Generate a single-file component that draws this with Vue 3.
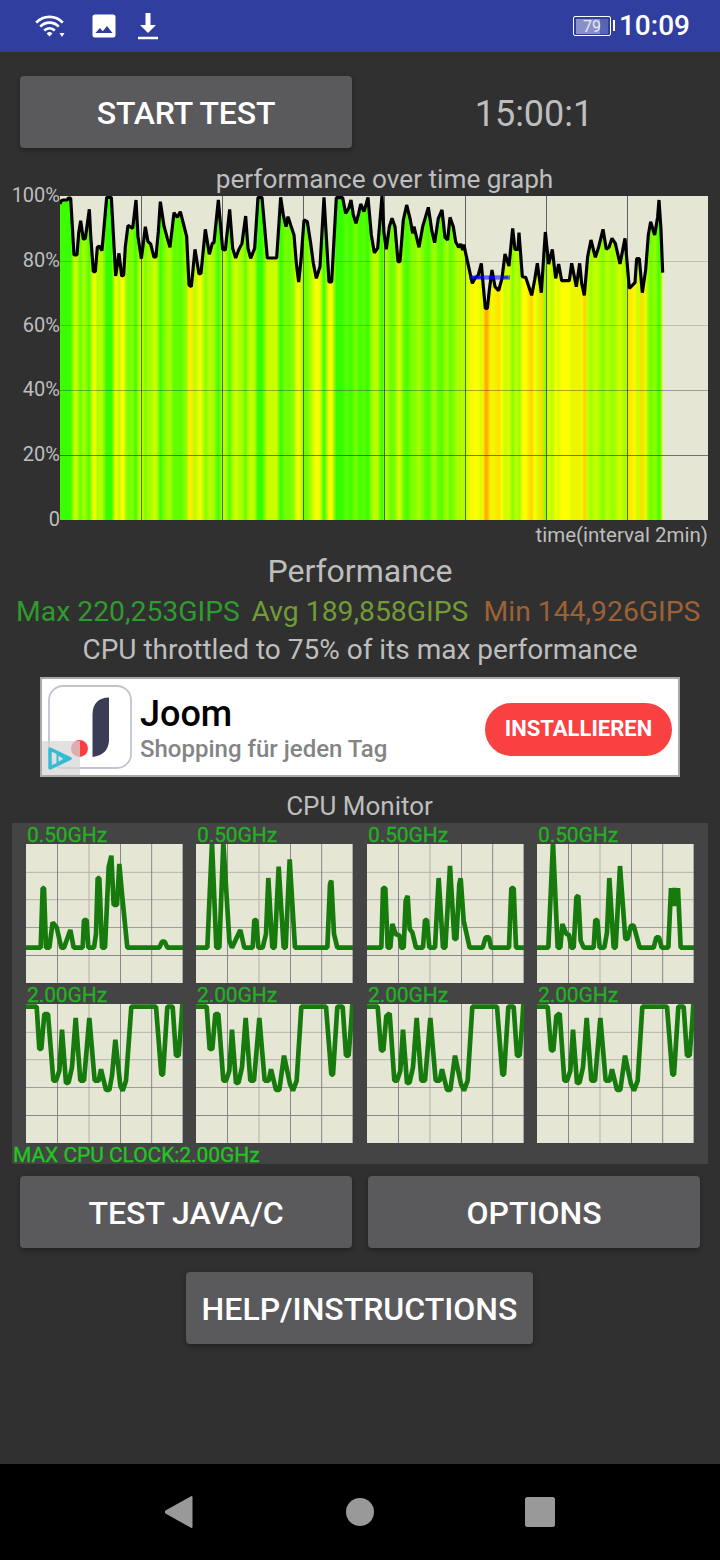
<template>
  <div class="screen">
    <header class="status-bar">
      <div class="status-icons">
        <svg class="icon-wifi" width="32" height="26" viewBox="0 0 32 26">
          <g fill="none" stroke="#fff" stroke-width="2.7">
            <path d="M2.2 9.6C9.5 2 21.5 2 28.8 9.6" />
            <path d="M6.2 13.6C11.5 8.4 19.5 8.4 24.8 13.6" />
            <path d="M10.2 17.6C13.4 14.6 17.6 14.6 20.8 17.6" />
          </g>
          <path d="M12.6 20.4Q15.5 17.8 18.4 20.4L15.5 23.6Z" fill="#fff" />
          <path d="M25.5 20H30.5L28 24Z" fill="#fff" />
        </svg>
        <svg class="icon-image" width="24" height="24" viewBox="0 0 24 24">
          <path
            fill="#fff"
            fill-rule="evenodd"
            d="M3 .5H21A2.5 2.5 0 0 1 23.5 3V21A2.5 2.5 0 0 1 21 23.5H3A2.5 2.5 0 0 1 .5 21V3A2.5 2.5 0 0 1 3 .5ZM3.5 19H20.5L15 12L10.8 17.2L7.8 14Z"
          />
        </svg>
        <svg class="icon-download" width="20" height="28" viewBox="0 0 20 28">
          <path d="M7.5 1H12.5V13H18L10 21L2 13H7.5ZM0 24.7H20V27.2H0Z" fill="#fff" />
        </svg>
      </div>
      <div class="status-right">
        <div class="battery"><span>79</span></div>
        <span class="clock">10:09</span>
      </div>
    </header>

    <main class="content">
      <div class="row top-row">
        <button class="btn start">START TEST</button>
        <div class="timer">15:00:1</div>
      </div>

      <div class="graph-title">performance over time graph</div>
      <div class="graph">
        <div class="axis">
          <span v-for="label in axisLabels" :key="label">{{ label }}</span>
        </div>
        <svg class="plot" width="648" height="324" viewBox="0 0 1944 972">
          <defs>
            <linearGradient id="heat" gradientUnits="userSpaceOnUse" x1="0" y1="0" x2="1944" y2="0">
              <stop
                v-for="(s, i) in stops"
                :key="i"
                :offset="s.offset"
                :stop-color="s.color"
              />
            </linearGradient>
          </defs>
          <rect width="1944" height="972" fill="#e6e6d4" />
          <polygon :points="areaPoints" fill="url(#heat)" />
          <g fill="#33333b" shape-rendering="crispEdges">
            <rect v-for="n in 7" :key="n" :x="n * 243" y="0" width="3" height="972" opacity="0.75" />
            <rect
              v-for="line in gridRows"
              :key="line.y"
              x="0"
              :y="line.y * 3"
              width="1944"
              height="3"
              :opacity="line.opacity"
            />
          </g>
          <polyline
            :points="linePoints"
            fill="none"
            stroke="#000"
            stroke-width="9.5"
            stroke-linejoin="bevel"
          />
          <rect x="1228" y="238" width="122" height="13" fill="#0000ff" opacity="0.55" />
          <rect x="1234" y="241" width="38" height="7" fill="#0000ff" opacity="0.8" />
          <rect x="1286" y="241" width="18" height="7" fill="#0000ff" opacity="0.8" />
          <rect x="1330" y="241" width="14" height="7" fill="#0000ff" opacity="0.6" />
        </svg>
      </div>
      <div class="time-label">time(interval 2min)</div>

      <div class="perf-title">Performance</div>
      <div class="stats">
        <span class="max">Max 220,253GIPS</span>
        <span class="avg">Avg 189,858GIPS</span>
        <span class="min">Min 144,926GIPS</span>
      </div>
      <div class="throttled">CPU throttled to 75% of its max performance</div>

      <div class="ad">
        <svg class="ad-logo" width="92" height="96" viewBox="0 0 92 96">
          <rect x="7" y="7" width="82" height="82" rx="14" fill="#fff" stroke="#c4c4d0" stroke-width="1.8" />
          <circle cx="37.5" cy="69.5" r="8.5" fill="#fb3f40" />
          <path d="M50.5 78V35Q51 19 67 18.5V62Q66 76 50.5 78Z" fill="#3b3d57" />
          <path d="M0 62H38V96H0Z" fill="#d6d6d6" fill-opacity="0.72" />
          <path d="M8 70V89L28 79.5Z" fill="none" stroke="#35bbd6" stroke-width="3.4" stroke-linejoin="round" />
          <path d="M15.5 75V84.5L23 79.8Z" fill="none" stroke="#35bbd6" stroke-width="2" />
        </svg>
        <div class="ad-text">
          <div class="ad-name">Joom</div>
          <div class="ad-sub">Shopping für jeden Tag</div>
        </div>
        <button class="install">INSTALLIEREN</button>
      </div>

      <div class="monitor-title">CPU Monitor</div>
      <div class="monitor">
        <div class="cores">
          <div v-for="(core, i) in cores" :key="i" class="core">
            <div class="freq">{{ core.freq }}</div>
            <svg width="157" height="139" viewBox="0 0 471 417">
              <rect width="471" height="417" fill="#e6e6d4" />
              <g stroke="#77777f" stroke-width="3">
                <path d="M94.5 0V417M283.5 0V417M377 0V417M0 334.5H471" opacity="0.85" />
                <path d="M0 250.5H471M470 0V417" opacity="0.65" />
                <path d="M189 0V417M0 85H471M0 167H471" opacity="0.45" />
              </g>
              <polyline
                :points="core.points"
                fill="none"
                stroke="#167a0d"
                stroke-width="14"
                stroke-linejoin="bevel"
              />
            </svg>
          </div>
        </div>
        <div class="max-clock">MAX CPU CLOCK:2.00GHz</div>
      </div>

      <div class="row bottom-row">
        <button class="btn">TEST JAVA/C</button>
        <button class="btn">OPTIONS</button>
      </div>
      <button class="btn help">HELP/INSTRUCTIONS</button>
    </main>

    <nav class="nav-bar">
      <svg width="30" height="34" viewBox="0 0 30 34">
        <path d="M0 17L26.5 2V32Z" fill="#999" stroke="#999" stroke-width="2" stroke-linejoin="round" />
      </svg>
      <svg width="30" height="34" viewBox="0 0 30 34">
        <circle cx="15" cy="17" r="14" fill="#999" />
      </svg>
      <svg width="30" height="34" viewBox="0 0 30 34">
        <rect x="0" y="2" width="30" height="30" rx="2.5" fill="#999" />
      </svg>
    </nav>
  </div>
</template>

<script setup>
const axisLabels = ['100%', '80%', '60%', '40%', '20%', '0']

const gridRows = [
  { y: 65, opacity: 0.22 },
  { y: 129, opacity: 0.22 },
  { y: 194, opacity: 0.4 },
  { y: 259, opacity: 0.65 }
]

// x,y samples of the benchmark, y = 0 is 100% and y = 972 is 0%
const samples = `
0,24 4,14 10,12 22,12 25,6 32,6 42,177 51,177 56,112 62,74 70,130 76,127 88,40 92,117
100,227 106,227 112,154 118,150 126,164 140,4 154,4 167,240 177,172 185,240 191,237
196,152 204,88 218,97 228,12 234,122 244,188 250,142 256,92 264,137 272,144 282,184
288,182 295,107 301,17 312,90 322,127 330,154 342,50 352,64 361,47 372,90 380,122
387,267 394,272 405,160 417,234 423,232 436,100 448,175 457,142 462,140 475,12
488,160 496,162 509,40 518,157 527,186 536,162 546,142 557,60 564,157 572,187 584,157
594,4 606,4 622,186 650,186 662,4 670,57 678,92 684,62 692,87 702,117 709,202 716,258
723,192 732,72 742,77 752,142 760,202 769,247 780,212 792,4 807,258 815,258 829,5
848,5 857,52 866,37 873,12 880,57 888,82 896,52 902,24 912,47 924,4 934,117 943,170
953,157 966,0 972,112 979,160 988,92 996,67 1005,92 1014,197 1020,197 1030,72 1040,27
1050,67 1058,112 1062,92 1077,154 1088,92 1105,34 1116,107 1124,140 1135,67 1146,42
1155,124 1163,132 1170,64 1180,92 1187,137 1196,154 1202,144 1208,162 1212,146
1216,167 1227,217 1237,262 1245,247 1255,237 1264,202 1270,272 1276,337 1282,337
1288,282 1296,222 1305,272 1316,284 1326,247 1335,174 1347,210 1358,97 1365,160
1374,160 1377,110 1387,242 1397,244 1415,298 1424,252 1432,202 1444,290 1456,108
1466,204 1477,160 1487,247 1496,204 1505,254 1528,254 1535,202 1549,272 1559,202
1565,262 1573,298 1583,182 1593,132 1606,184 1615,157 1629,100 1639,160 1647,154
1656,127 1666,142 1680,204 1695,127 1708,277 1725,260 1730,188 1738,188 1747,290
1757,222 1765,117 1772,77 1784,117 1793,62 1797,12 1803,102 1808,230
`.trim().split(/\s+/).map((p) => p.split(',').map(Number))

// green at 100%, yellow at 75%, orange below
function heatColor(y) {
  const loss = (y / 972) * 100
  const r = Math.min(255, 48 + loss * 8.1)
  const g = loss <= 26 ? 255 : 255 - (loss - 26) * 9.5
  return `rgb(${Math.round(r)}, ${Math.round(g)}, 0)`
}

const linePoints = samples.map((p) => p.join(',')).join(' ')
const areaPoints = `0,972 ${linePoints} 1808,972`
const stops = samples.map(([x, y]) => ({ offset: x / 1944, color: heatColor(y) }))

const tailBusy = '316,8 390,8 406,212 411,212 424,8 440,8 450,155 458,155 466,50 469,0'
const midBusy = '82,230 90,230 100,200 108,77 120,238 128,235 138,190 149,42 163,230 174,230 190,42 206,230 218,230 225,196 240,258 250,258'

const cores = [
  {
    freq: '0.50GHz',
    points: '0,311 44,311 50,132 54,132 60,311 70,311 80,235 92,250 106,311 114,311 133,258 143,311 170,311 174,228 182,228 187,311 204,311 210,270 215,102 220,102 228,311 237,311 248,70 256,35 263,183 273,183 280,60 288,150 304,311 400,311 408,293 416,293 424,311 471,311'
  },
  {
    freq: '0.50GHz',
    points: '0,311 34,311 48,-5 61,311 70,311 82,-5 100,290 108,311 133,258 145,311 170,311 175,228 181,228 187,311 200,311 210,270 217,102 229,311 236,311 248,68 263,311 269,311 281,46 297,311 394,311 402,120 406,110 414,270 424,311 471,311'
  },
  {
    freq: '0.50GHz',
    points: '0,311 43,311 48,132 55,132 62,311 70,311 76,240 86,270 98,275 102,311 110,311 116,170 122,156 128,255 136,265 147,311 168,311 174,228 180,228 187,311 204,311 215,102 228,311 235,311 249,66 262,285 268,285 277,120 281,103 290,230 308,311 347,311 356,280 366,280 372,311 426,311 433,132 440,132 447,311 471,311'
  },
  {
    freq: '0.50GHz',
    points: '0,311 34,311 48,-5 62,311 70,311 76,240 88,270 96,272 102,311 110,311 118,160 124,155 131,290 140,311 170,311 175,228 181,228 188,311 202,311 210,265 217,102 230,311 236,311 249,66 265,285 272,285 282,245 290,245 308,311 350,311 358,280 366,280 374,311 394,311 402,132 409,186 413,132 417,186 423,132 431,311 471,311'
  },
  {
    freq: '2.00GHz',
    points: `0,8 32,8 40,135 46,135 55,30 66,30 ${midBusy} 258,215 268,107 283,245 290,260 300,230 ${tailBusy}`
  },
  {
    freq: '2.00GHz',
    points: `0,8 32,8 41,135 49,135 58,30 67,30 ${midBusy} 264,155 282,240 291,260 302,230 ${tailBusy}`
  },
  {
    freq: '2.00GHz',
    points: `0,8 32,8 42,138 49,140 58,36 68,28 ${midBusy} 264,155 282,240 291,260 302,230 ${tailBusy}`
  },
  {
    freq: '2.00GHz',
    points: `0,8 32,8 42,138 49,140 58,36 68,28 ${midBusy} 264,155 282,240 291,260 302,230 ${tailBusy}`
  }
]
</script>

<style>
body {
  background: #303030;
}
</style>

<style scoped>
.screen {
  display: flex;
  flex-direction: column;
  width: 720px;
  height: 1560px;
  background: #303030;
  color: #bebebe;
  font-family: Roboto, sans-serif;
  overflow: hidden;
}

svg {
  display: block;
}

button {
  border: none;
  padding: 0;
  font-family: inherit;
}

.status-bar {
  display: flex;
  justify-content: space-between;
  align-items: center;
  height: 52px;
  padding: 0 30px 0 34px;
  background: #303f9f;
  flex: none;
}

.status-icons {
  display: flex;
  align-items: center;
}

.icon-image {
  margin-left: 26px;
}

.icon-download {
  margin-left: 22px;
}

.status-right {
  display: flex;
  align-items: center;
  color: #fff;
}

.battery {
  position: relative;
  box-sizing: border-box;
  width: 38px;
  height: 20px;
  margin-right: 8px;
  border: 1.5px solid #fff;
  border-radius: 2px;
  background: linear-gradient(90deg, #8890ca 76%, #5864b4 76%) content-box;
  padding: 1.5px;
  font-size: 16px;
  line-height: 15px;
  text-align: center;
  color: #e6e8f5;
}

.battery::after {
  content: '';
  position: absolute;
  right: -5px;
  top: 3px;
  width: 2px;
  height: 11px;
  background: #fff;
}

.clock {
  font-size: 28px;
  font-weight: 500;
  line-height: 52px;
}

.content {
  flex: 1;
  padding: 24px 12px 0;
}

.row {
  display: flex;
  gap: 16px;
  padding: 0 8px;
}

.btn {
  width: 332px;
  height: 72px;
  border-radius: 4px;
  background: #5a595b;
  color: #fff;
  font-size: 32px;
  font-weight: 500;
  line-height: 74px;
  box-shadow: 0 2px 5px rgba(0, 0, 0, 0.35);
}

.start {
  letter-spacing: -0.15px;
}

.timer {
  width: 332px;
  line-height: 76px;
  height: 72px;
  font-size: 36px;
  text-align: center;
}

.graph-title {
  height: 32px;
  margin-top: 16px;
  padding-left: 49px;
  font-size: 26.2px;
  line-height: 30px;
  text-align: center;
}

.graph {
  display: flex;
  height: 324px;
}

.axis {
  display: flex;
  flex-direction: column;
  justify-content: space-between;
  width: 48px;
  height: 348px;
  margin-top: -13px;
  font-size: 20px;
  line-height: 24px;
  align-items: flex-end;
}

.time-label {
  height: 32px;
  font-size: 20.5px;
  line-height: 30px;
  text-align: right;
}

.perf-title {
  height: 40px;
  font-size: 32px;
  line-height: 38px;
  text-align: center;
}

.stats {
  display: grid;
  grid-template-columns: repeat(3, 232px);
  height: 38px;
  font-size: 28.3px;
  line-height: 40px;
  text-align: center;
  white-space: nowrap;
}

.max {
  color: #2f9b2f;
}

.avg {
  color: #729b36;
}

.min {
  color: #9c6237;
}

.throttled {
  height: 38px;
  font-size: 28px;
  line-height: 40px;
  text-align: center;
}

.ad {
  display: flex;
  align-items: center;
  box-sizing: border-box;
  width: 640px;
  height: 100px;
  margin: 9px auto 0;
  padding-right: 6px;
  border: 2px solid #a8a8a8;
  background: #fff;
}

.ad-text {
  flex: 1;
  margin-left: 6px;
  padding-top: 7px;
}

.ad-name {
  color: #000;
  font-size: 36px;
  font-weight: 500;
  line-height: 37px;
}

.ad-sub {
  color: #848484;
  font-size: 24px;
  font-weight: 500;
  line-height: 32px;
}

.install {
  width: 187px;
  height: 53px;
  margin-top: 5px;
  padding-bottom: 2px;
  border-radius: 27px;
  background: #f94142;
  color: #fff;
  font-size: 22px;
  font-weight: 700;
}

.monitor-title {
  height: 32px;
  margin-top: 14px;
  padding-right: 1px;
  font-size: 26px;
  line-height: 30px;
  text-align: center;
}

.monitor {
  height: 341px;
  background: #444;
}

.cores {
  display: grid;
  grid-template-columns: 170px 171px 170px 171px;
  grid-auto-rows: 160px;
  padding-left: 14px;
}

.freq {
  height: 21px;
  padding-left: 1px;
  color: #23b223;
  font-size: 21px;
  line-height: 24px;
  letter-spacing: -0.1px;
  -webkit-text-stroke: 0.3px #23b223;
}

.max-clock {
  height: 21px;
  padding-left: 1px;
  color: #22c722;
  font-size: 21px;
  line-height: 24px;
  letter-spacing: -0.05px;
  -webkit-text-stroke: 0.3px #22c722;
}

.bottom-row {
  margin-top: 12px;
}

.help {
  display: block;
  width: 347px;
  margin: 24px 0 0 174px;
}

.nav-bar {
  display: flex;
  justify-content: center;
  align-items: center;
  gap: 150px;
  height: 96px;
  background: #000;
  flex: none;
}
</style>
